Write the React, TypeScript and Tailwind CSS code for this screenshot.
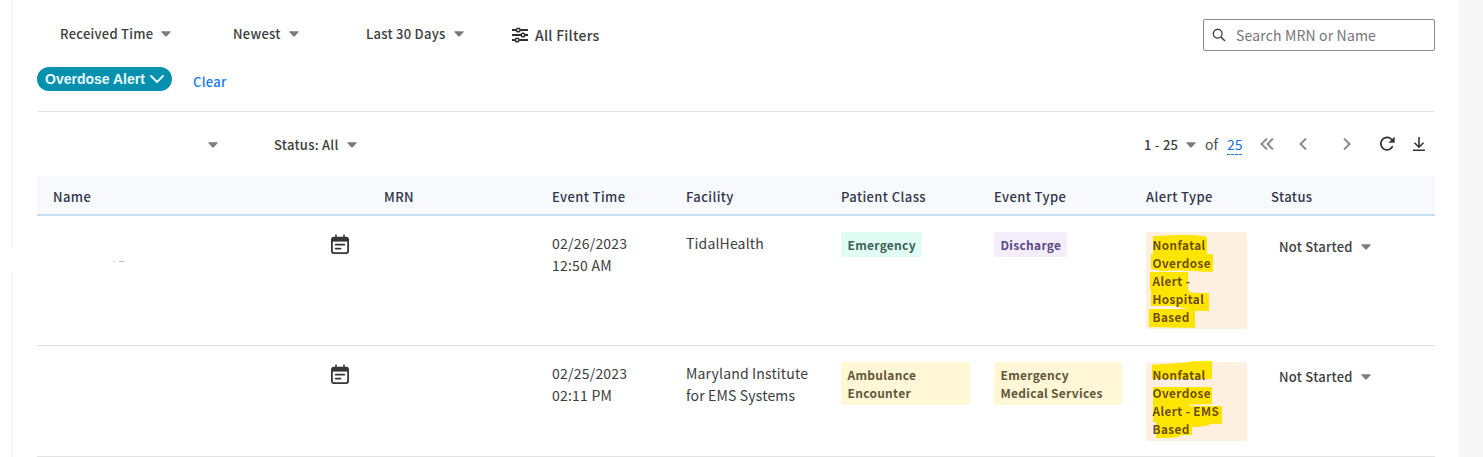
import type { ReactNode } from "react";

const COLUMNS = "grid grid-cols-[278px_53px_168px_134px_155px_153px_152px_125px_1fr] pl-4";

function Caret() {
  return (
    <svg className="h-1.5 w-2.5 shrink-0" viewBox="0 0 10 6" fill="#7c7c80">
      <path d="M0.9 0.2h8.2c.7 0 .8.6.4 1L5.8 5.2a1.1 1.1 0 0 1-1.6 0L.5 1.2C.1.8.2.2.9.2Z" />
    </svg>
  );
}

interface DropdownProps {
  label: string;
  className?: string;
}

function Dropdown({ label, className = "" }: DropdownProps) {
  return (
    <div
      className={`flex items-center gap-2 text-[13px] leading-5 font-medium tracking-[0.26px] text-[#3d3d40] ${className}`}
    >
      <span className="whitespace-nowrap">{label}</span>
      <Caret />
    </div>
  );
}

function SlidersIcon() {
  return (
    <svg className="h-4 w-4" viewBox="0 0 16 16" fill="none" stroke="#2f2f33" strokeWidth="1.8">
      <path d="M0 3h4.2M8.2 3H16M0 8h9M13 8h3M0 13h3.2M7.2 13H16" />
      <circle cx="6.2" cy="3" r="1.8" strokeWidth="1.5" />
      <circle cx="11" cy="8" r="1.8" strokeWidth="1.5" />
      <circle cx="5.2" cy="13" r="1.8" strokeWidth="1.5" />
    </svg>
  );
}

function CalendarIcon() {
  return (
    <svg className="mt-px h-5 w-[18px]" viewBox="0 0 18 20" fill="none" stroke="#363639">
      <path d="M5 0.4v3M13 0.4v3" strokeWidth="1.5" />
      <rect x="0.9" y="3.6" width="16.2" height="15.5" rx="2" strokeWidth="1.8" />
      <path d="M1 3.4h16v4.2H1z" fill="#363639" stroke="none" />
      <path d="M4.7 10.7h8.6M4.7 14.6h4.8" strokeWidth="1.8" strokeLinecap="round" />
    </svg>
  );
}

function Toolbar() {
  return (
    <div className="flex h-16 items-center pt-0.5">
      <div className="w-[237px] pl-[171px]">
        <Caret />
      </div>
      <Dropdown label="Status: All" />
      <div className="ml-auto flex items-center pr-2.5">
        <Dropdown label="1 - 25" className="w-[61px]" />
        <span className="mb-0.5 w-[22px] text-sm leading-5 text-[#4a4a4d]">of</span>
        <span className="mb-0.5 w-4 bg-[repeating-linear-gradient(90deg,#1a6fe0_0_3px,transparent_3px_4px)] bg-[length:100%_1px] bg-bottom bg-no-repeat pb-px text-sm leading-5 text-[#1a6fe0]">
          25
        </span>
        <svg className="mb-0.5 ml-[17px] h-3 w-3.5" viewBox="0 0 14 12" fill="none" stroke="#8b8b8e" strokeWidth="2">
          <path d="M7 .5 1.5 6 7 11.5M13 .5 7.5 6l5.5 5.5" />
        </svg>
        <svg className="mb-0.5 ml-[25px] h-3 w-2" viewBox="0 0 8 12" fill="none" stroke="#8b8b8e" strokeWidth="2">
          <path d="M7 .5 1.5 6 7 11.5" />
        </svg>
        <svg className="mb-0.5 ml-9 h-3 w-2" viewBox="0 0 8 12" fill="none" stroke="#8b8b8e" strokeWidth="2">
          <path d="M1 .5 6.5 6 1 11.5" />
        </svg>
        <svg className="mr-px mb-[3px] ml-7 h-[15px] w-4" viewBox="0 0 16 15" fill="none">
          <path d="M13.7 10.2A6.2 6.2 0 1 1 11.6 2.6l2 1.6" stroke="#333336" strokeWidth="1.7" />
          <path d="M15.5 1v5.6H9.9z" fill="#333336" stroke="#333336" strokeWidth="0.4" strokeLinejoin="round" />
        </svg>
        <svg className="mb-0.5 ml-[17px] h-3.5 w-3" viewBox="0 0 12 14" fill="none" stroke="#333336" strokeWidth="1.6">
          <path d="M6 0v10M1.5 5.7 6 10.2l4.5-4.5M0 13.2h12" />
        </svg>
      </div>
    </div>
  );
}

interface BadgeProps {
  children: ReactNode;
  className: string;
}

function Badge({ children, className }: BadgeProps) {
  return (
    <div
      className={`relative rounded-xs pt-1 pb-[3px] pl-[6.5px] text-[12px] leading-[18px] font-bold tracking-[0.28px] ${className}`}
    >
      {children}
    </div>
  );
}

// Marker strokes over an alert badge, in thirds of a pixel
function Marker({ strokes }: { strokes: string[] }) {
  return (
    <svg
      className="pointer-events-none absolute top-0 left-0 h-[97px] w-[101px] overflow-visible mix-blend-multiply"
      viewBox="0 0 303 291"
      fill="#fff400"
    >
      <path d={strokes.join("")} />
    </svg>
  );
}

const hospitalMarker = [
  "M21 13Q90 8 130 9Q170 10 183 15V66H201V119H170Q90 111 50 117L15 112V66H21Z",
  "M12 120H126V173H12Z",
  "M15 173H126L135 182L189 183V237H150Q110 226 80 222H15Z",
  "M9 231H133L147 234V287H110L9 285Z",
];

const emsMarker = [
  "M18 8Q60 6 110 2Q150 -5 198 -3V51H18Z",
  "M21 75H198V126L130 128V133L228 132V185H198Q175 195 140 195H138V219H110Q90 229 60 228H30V180H21Z",
];

interface Alert {
  date: string;
  time: string;
  facility: string;
  patientClass: string;
  eventType: string;
  alertLines: string[];
  classStyle: string;
  typeStyle: string;
  marker: string[];
  height: string;
}

const alerts: Alert[] = [
  {
    date: "02/26/2023",
    time: "12:50 AM",
    facility: "TidalHealth",
    patientClass: "Emergency",
    eventType: "Discharge",
    alertLines: ["Nonfatal", "Overdose", "Alert -", "Hospital", "Based"],
    classStyle: "w-[81px] bg-[#e1fcf3] text-[#3c625b]",
    typeStyle: "w-[73px] bg-[#f4eefc] text-[#5c4884]",
    marker: hospitalMarker,
    height: "h-[130px]",
  },
  {
    date: "02/25/2023",
    time: "02:11 PM",
    facility: "Maryland Institute for EMS Systems",
    patientClass: "Ambulance Encounter",
    eventType: "Emergency Medical Services",
    alertLines: ["Nonfatal", "Overdose", "Alert - EMS", "Based"],
    classStyle: "w-[129px] pr-1.5 bg-[#fff7d6] text-[#63573b]",
    typeStyle: "w-[128px] pr-1.5 bg-[#fff7d6] text-[#63573b]",
    marker: emsMarker,
    height: "h-[111px]",
  },
];

const headers = ["Name", "", "MRN", "Event Time", "Facility", "Patient Class", "Event Type", "Alert Type", "Status"];

function AlertRow({ alert, first }: { alert: Alert; first: boolean }) {
  return (
    <div className={`${COLUMNS} ${alert.height} items-start border-b border-[#e3e3e4] pt-4`}>
      <div className="flex gap-1 pt-[29px] pl-[60px]">
        {first && (
          <>
            <span className="h-px w-0.5 bg-[#d4d4d4]" />
            <span className="h-px w-[5px] bg-[#bdbdbd]" />
          </>
        )}
      </div>
      <div className="pt-px">
        <CalendarIcon />
      </div>
      <div />
      <div className="text-sm leading-[22px] tracking-[0.22px]">
        <div>{alert.date}</div>
        <div>{alert.time}</div>
      </div>
      <div className="w-[130px] text-sm leading-[22px] tracking-[0.16px]">{alert.facility}</div>
      <Badge className={alert.classStyle}>{alert.patientClass}</Badge>
      <Badge className={alert.typeStyle}>{alert.eventType}</Badge>
      <Badge className="isolate w-[101px] bg-[#fef0e1] text-[#6b4f2c]">
        {alert.alertLines.map((line) => (
          <div key={line}>{line}</div>
        ))}
        <Marker strokes={alert.marker} />
      </Badge>
      <Dropdown label="Not Started" className="pt-[5px] pl-2" />
    </div>
  );
}

export default function App() {
  return (
    <div className="flex h-[457px] w-[1483px] overflow-hidden bg-white font-['Noto_Sans_CJK_SC',sans-serif] text-[#3d3d40]">
      <div className="flex w-[13px] flex-col items-end">
        <div className="h-[249px] w-px bg-[#f3f3f3]" />
        <div className="mt-6 w-px flex-1 bg-[#f3f3f3]" />
      </div>
      <main className="w-[1446px] pr-6 pl-6">
        <div className="flex h-[67px] items-start pl-[23px]">
          <Dropdown label="Received Time" className="mt-6 w-[173px]" />
          <Dropdown label="Newest" className="mt-6 w-[133px]" />
          <Dropdown label="Last 30 Days" className="mt-6 w-[146px]" />
          <div className="mt-[25px] flex items-center gap-[7px] text-sm leading-5 font-medium tracking-[0.24px]">
            <SlidersIcon />
            <span>All Filters</span>
          </div>
          <div className="mt-[19px] ml-auto flex h-8 w-[232px] items-center gap-[10px] rounded-xs border border-[#8a8a8d] pl-2">
            <svg className="h-3.5 w-3.5" viewBox="0 0 14 14" fill="none" stroke="#333336" strokeWidth="1.2">
              <circle cx="5.7" cy="5.7" r="4.4" />
              <path d="m9 9 4 4" />
            </svg>
            <span className="text-sm leading-5 tracking-[0.16px] text-[#757578]">Search MRN or Name</span>
          </div>
        </div>
        <div className="flex h-[45px] items-start border-b border-[#e3e3e4]">
          <button className="flex h-6 w-[135px] items-center gap-[5px] rounded-full bg-[#0590ae] pl-2 font-['Liberation_Sans',Arial,sans-serif] text-sm font-bold text-[#e9fbff]">
            <span className="whitespace-nowrap">Overdose Alert</span>
            <svg className="h-2 w-3.5" viewBox="0 0 14 8" fill="none" stroke="#e9fbff" strokeWidth="1.8">
              <path d="m1 1 6 6 6-6" strokeLinecap="round" strokeLinejoin="round" />
            </svg>
          </button>
          <a className="mt-[5px] ml-[21px] text-[13px] leading-5 font-medium tracking-[0.3px] text-[#1478f5]">Clear</a>
        </div>
        <Toolbar />
        <div className={`${COLUMNS} h-10 items-center border-b-2 border-[#c9dff6] bg-[#f7f9fd] pt-1`}>
          {headers.map((header, i) => (
            <div key={i} className="text-[13px] leading-5 font-medium tracking-[0.4px] text-[#33364a]">
              {header}
            </div>
          ))}
        </div>
        {alerts.map((alert, i) => (
          <AlertRow key={alert.date} alert={alert} first={i === 0} />
        ))}
      </main>
      <div className="flex-1 bg-[#f6f6f6]" />
    </div>
  );
}
